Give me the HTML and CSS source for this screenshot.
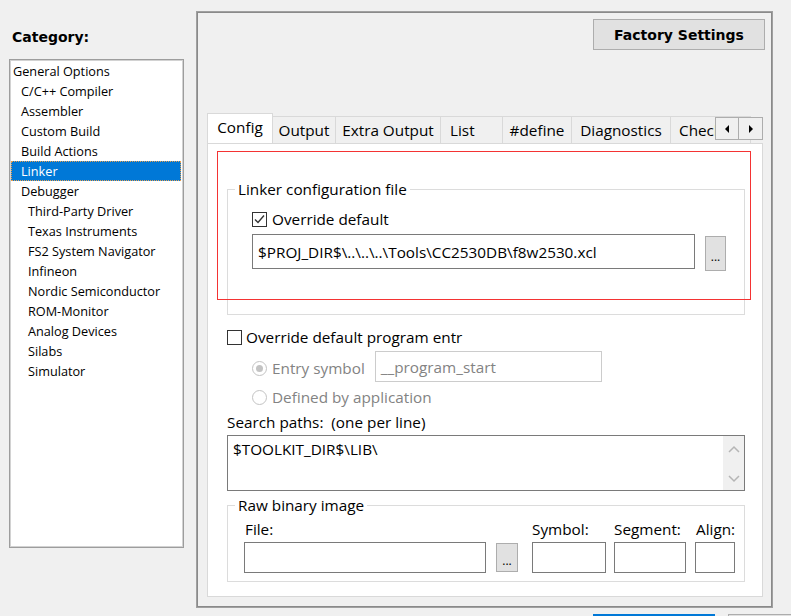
FILE: index.html
```html
<!DOCTYPE html>
<html>
<head>
<meta charset="utf-8">
<link rel="stylesheet" href="styles.css">
</head>
<body>
<div class="dialog">
  <div class="left">
    <div class="cat-label">Category:</div>
    <ul class="catlist">
      <li class="l0">General Options</li>
      <li class="l1">C/C++ Compiler</li>
      <li class="l1">Assembler</li>
      <li class="l1">Custom Build</li>
      <li class="l1">Build Actions</li>
      <li class="l1 sel">Linker</li>
      <li class="l1">Debugger</li>
      <li class="l2">Third-Party Driver</li>
      <li class="l2">Texas Instruments</li>
      <li class="l2">FS2 System Navigator</li>
      <li class="l2">Infineon</li>
      <li class="l2">Nordic Semiconductor</li>
      <li class="l2">ROM-Monitor</li>
      <li class="l2">Analog Devices</li>
      <li class="l2">Silabs</li>
      <li class="l2">Simulator</li>
    </ul>
  </div>
  <div class="panel">
    <div class="panel-top">
      <div class="btn factory">Factory Settings</div>
    </div>
    <div class="tabs">
      <div class="tab active t-config">Config</div>
      <div class="tab t-output">Output</div>
      <div class="tab t-extra">Extra Output</div>
      <div class="tab t-list">List</div>
      <div class="tab t-define">#define</div>
      <div class="tab t-diag">Diagnostics</div>
      <div class="tab t-chec">Checksum</div>
      <div class="tab-arrows">
        <div class="arrow"><svg width="6" height="8" viewBox="0 0 6 8"><path d="M5 0 L1 4 L5 8 Z" fill="#000"/></svg></div>
        <div class="arrow"><svg width="6" height="8" viewBox="0 0 6 8"><path d="M1 0 L5 4 L1 8 Z" fill="#000"/></svg></div>
      </div>
    </div>
    <div class="pane">
      <div class="redbox"></div>
      <fieldset class="group g1">
        <legend>Linker configuration file</legend>
        <div class="g1-body">
          <div class="check-row">
            <span class="checkbox checked"><svg width="13" height="13" viewBox="0 0 13 13"><path d="M2 6.5 L5 9.5 L11 2.5" fill="none" stroke="#333" stroke-width="1.4"/></svg></span>
            <span class="lbl">Override default</span>
          </div>
          <div class="file-row">
            <div class="edit wide">$PROJ_DIR$\..\..\..\Tools\CC2530DB\f8w2530.xcl</div>
            <div class="btn dots tall">...</div>
          </div>
        </div>
      </fieldset>
      <div class="check-row entry-check">
        <span class="checkbox"></span>
        <span class="lbl">Override default program entr</span>
      </div>
      <div class="radio-row r1">
        <span class="radio on"></span>
        <span class="lbl dis">Entry symbol</span>
        <div class="edit disabled sym">__program_start</div>
      </div>
      <div class="radio-row r2">
        <span class="radio"></span>
        <span class="lbl dis">Defined by application</span>
      </div>
      <div class="search-lbl">Search paths:&nbsp; (one per line)</div>
      <div class="textarea">
        <div class="ta-text">$TOOLKIT_DIR$\LIB\</div>
        <div class="ta-scroll">
          <svg width="12" height="8" viewBox="0 0 12 8"><path d="M1 7 L6 2 L11 7" fill="none" stroke="#b5b5b5" stroke-width="1.5"/></svg>
          <svg width="12" height="8" viewBox="0 0 12 8"><path d="M1 1 L6 6 L11 1" fill="none" stroke="#b5b5b5" stroke-width="1.5"/></svg>
        </div>
      </div>
      <fieldset class="group g2">
        <legend>Raw binary image</legend>
        <div class="g2-body">
          <div class="col c-file">
            <div class="clbl">File:</div>
            <div class="edit short"></div>
          </div>
          <div class="col c-dots">
            <div class="clbl"></div>
            <div class="btn dots small">...</div>
          </div>
          <div class="col c-sym">
            <div class="clbl">Symbol:</div>
            <div class="edit short"></div>
          </div>
          <div class="col c-seg">
            <div class="clbl">Segment:</div>
            <div class="edit short"></div>
          </div>
          <div class="col c-align">
            <div class="clbl">Align:</div>
            <div class="edit short"></div>
          </div>
        </div>
      </fieldset>
    </div>
  </div>
</div>
<div class="bottom-row">
  <div class="bbtn default"></div>
  <div class="bbtn last"></div>
</div>
</body>
</html>
```
FILE: styles.css
```css
html, body {
  margin: 0;
  padding: 0;
}
body {
  width: 791px;
  height: 616px;
  overflow: hidden;
  background: #f0f0f0;
  font-family: "Open Sans", "Noto Sans", sans-serif;
  font-size: 15.3px;
  color: #000;
}
.dialog {
  display: flex;
  align-items: flex-start;
  padding-top: 11px;
}
.left {
  margin-left: 9px;
  width: 175px;
  display: flex;
  flex-direction: column;
}
.cat-label {
  font-family: "DejaVu Sans", sans-serif;
  font-weight: bold;
  font-size: 14px;
  height: 16px;
  line-height: 16px;
  margin-top: 18px;
  margin-left: 3px;
}
.catlist {
  list-style: none;
  margin: 14px 0 0 0;
  padding: 1px 2px 0 1px;
  height: 489px;
  box-sizing: border-box;
  background: #fff;
  border: 1px solid #9d9d9d;
  box-shadow: inset 0 0 0 1px #d2d2d2;
  font-size: 12.7px;
}
.catlist li {
  height: 20px;
  line-height: 20px;
  white-space: nowrap;
}
.catlist .l0 { padding-left: 2px; }
.catlist .l1 { padding-left: 10px; }
.catlist .l2 { padding-left: 17px; }
.catlist .sel {
  background: #0078d7;
  color: #fff;
  outline: 1px dotted #e8a050;
  outline-offset: -1px;
}
.panel {
  margin-left: 12px;
  width: 577px;
  height: 597px;
  box-sizing: border-box;
  border: 1px solid #a0a0a0;
  box-shadow: inset 1px 1px 0 #8a8a8a, inset -1px -1px 0 #8a8a8a;
  padding: 1px 9px 0 10px;
  display: flex;
  flex-direction: column;
}
.panel-top {
  display: flex;
  justify-content: flex-end;
  padding-top: 6px;
  margin-right: -2px;
}
.btn {
  background: #e1e1e1;
  border: 1px solid #adadad;
  box-sizing: border-box;
  display: flex;
  align-items: center;
  justify-content: center;
}
.factory {
  width: 172px;
  height: 31px;
  font-family: "DejaVu Sans", sans-serif;
  font-weight: bold;
  font-size: 14px;
}
.tabs {
  position: relative;
  margin-top: 63px;
  height: 30px;
  display: flex;
  align-items: flex-end;
  overflow: hidden;
  z-index: 1;
}
.tab {
  height: 27px;
  box-sizing: border-box;
  border: 1px solid #d9d9d9;
  border-bottom: none;
  border-left: none;
  background: #f0f0f0;
  line-height: 26px;
  text-align: center;
  white-space: nowrap;
  flex: none;
}
.tab.active {
  height: 31px;
  margin-bottom: -1px;
  background: #fff;
  border-left: 1px solid #d9d9d9;
  line-height: 27px;
}
.t-config { width: 66px; }
.t-output { width: 63px; }
.t-extra { width: 105px; }
.t-list { width: 62px; text-align: left; padding-left: 9px; }
.t-define { width: 69px; }
.t-diag { width: 99px; }
.t-chec { width: 80px; text-align: left; padding-left: 8px; }
.tab-arrows {
  position: absolute;
  right: 0;
  top: 4px;
  display: flex;
}
.arrow {
  width: 24px;
  height: 23px;
  box-sizing: border-box;
  border: 1px solid #adadad;
  background: #f0f0f0;
  display: flex;
  align-items: center;
  justify-content: center;
}
.arrow + .arrow { border-left: none; }
.pane {
  position: relative;
  height: 454px;
  box-sizing: border-box;
  border: 1px solid #d9d9d9;
  background: #fff;
  padding: 0 17px 0 19px;
  display: flex;
  flex-direction: column;
}
.redbox {
  position: absolute;
  left: 9px;
  top: 7px;
  width: 534px;
  height: 149px;
  box-sizing: border-box;
  border: 1px solid #f43333;
  pointer-events: none;
}
.group {
  margin: 0;
  padding: 0;
  border: 1px solid #dcdcdc;
  min-width: 0;
}
.group legend {
  margin-left: 7px;
  padding: 0 3px;
  line-height: 20px;
}
.g1 { margin-top: 35px; }
.g1-body {
  padding: 10px 18px 43px 24px;
}
.check-row {
  display: flex;
  align-items: center;
  height: 20px;
}
.checkbox {
  width: 15px;
  height: 15px;
  box-sizing: border-box;
  border: 1px solid #333;
  background: #fff;
  display: flex;
  align-items: center;
  justify-content: center;
  flex: none;
}
.lbl {
  margin-left: 5px;
  white-space: nowrap;
}
.entry-check .lbl { margin-left: 4px; }
.file-row {
  display: flex;
  align-items: flex-start;
  margin-top: 5px;
}
.edit {
  box-sizing: border-box;
  border: 1px solid #7a7a7a;
  background: #fff;
  padding-left: 5px;
  display: flex;
  align-items: center;
  white-space: nowrap;
  overflow: hidden;
}
.edit.wide {
  flex: 1;
  height: 35px;
}
.dots {
  font-size: 12px;
  line-height: 1;
  padding-top: 6px;
}
.dots.tall {
  width: 21px;
  height: 35px;
  margin-left: 10px;
  margin-top: 2px;
}
.entry-check { margin-top: 12px; }
.radio-row {
  display: flex;
  align-items: center;
  padding-left: 25px;
}
.r1 { margin-top: 4px; height: 31px; }
.r2 { margin-top: 5px; height: 20px; }
.radio {
  width: 15px;
  height: 15px;
  box-sizing: border-box;
  border: 1px solid #c3c3c3;
  border-radius: 50%;
  background: #fff;
  flex: none;
  display: flex;
  align-items: center;
  justify-content: center;
}
.radio.on::after {
  content: "";
  width: 7px;
  height: 7px;
  border-radius: 50%;
  background: #c3c3c3;
}
.r1 .radio { margin-top: 4px; }
.lbl.dis { color: #838383; }
.r1 .lbl { margin-top: 3px; }
.edit.disabled {
  border-color: #cccccc;
  color: #838383;
}
.sym {
  width: 227px;
  height: 31px;
  margin-left: 10px;
}
.search-lbl {
  margin-top: 5px;
  height: 20px;
  line-height: 20px;
}
.textarea {
  margin-top: 3px;
  height: 56px;
  box-sizing: border-box;
  border: 1px solid #7a7a7a;
  background: #fff;
  display: flex;
}
.ta-text {
  flex: 1;
  padding: 2px 5px;
  line-height: 22px;
}
.ta-scroll {
  width: 21px;
  background: #f0f0f0;
  display: flex;
  flex-direction: column;
  justify-content: space-between;
  align-items: center;
  padding: 9px 0 7px;
  box-sizing: border-box;
}
.g2 { margin-top: 4px; }
.g2-body {
  display: flex;
  padding: 4px 9px 8px 16px;
}
.col {
  display: flex;
  flex-direction: column;
}
.clbl {
  height: 20px;
  line-height: 20px;
  margin-bottom: 3px;
  white-space: nowrap;
}
.edit.short {
  height: 31px;
}
.c-file { width: 242px; }
.c-file .clbl { padding-left: 1px; }
.c-dots { width: 22px; margin-left: 10px; }
.dots.small {
  width: 22px;
  height: 29px;
  margin-top: 1px;
}
.c-sym { width: 74px; margin-left: 14px; }
.c-seg { width: 72px; margin-left: 8px; }
.c-align { width: 40px; margin-left: 9px; }
.c-align .clbl { padding-left: 1px; }
.bottom-row {
  display: flex;
  margin-top: 6px;
  padding-left: 593px;
  width: 198px;
  overflow: hidden;
}
.bbtn {
  width: 122px;
  height: 24px;
  box-sizing: border-box;
  border: 1px solid #adadad;
  background: #e1e1e1;
  flex: none;
}
.bbtn.default {
  border: 2px solid #0078d7;
}
.bbtn.last {
  width: 63px;
  margin-left: 13px;
  border-right: none;
}
```
